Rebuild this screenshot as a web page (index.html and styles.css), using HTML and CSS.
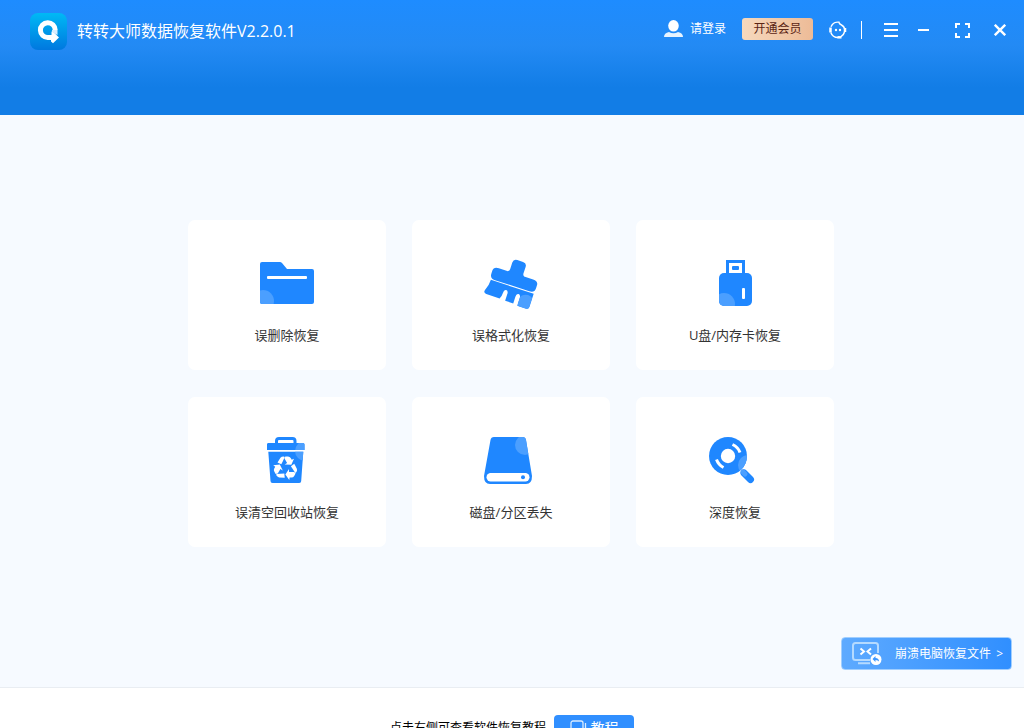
FILE: index.html
```html
<!DOCTYPE html>
<html lang="zh-CN">
<head>
<meta charset="utf-8">
<title>转转大师数据恢复软件</title>
<meta name="viewport" content="width=device-width, initial-scale=1">
<link rel="stylesheet" href="styles.css">
</head>
<body class="app">
<header class="header">
  <div class="brand">
    <svg class="logo" viewBox="0 0 37 37" aria-hidden="true">
      <defs><linearGradient id="logo-bg" x1="0" y1="0" x2="0" y2="1"><stop offset="0" stop-color="#00b9f5"/><stop offset="1" stop-color="#0078df"/></linearGradient></defs>
      <rect width="37" height="37" rx="8" fill="url(#logo-bg)"/>
      <path d="M18 24.500A7.400 7.400 0 1 1 25.200 17" fill="none" stroke="#fff" stroke-width="5"/>
      <path d="M17.500 22h4V18.500L24 19.500 29 24.500 23 30.300 21 28.500V27h-3.500z" fill="#fff"/>
      <path d="M22 17h5.500v5L22 19z" fill="#d9edfd"/>
    </svg>
    <h1 class="title">转转大师数据恢复软件V2.2.0.1</h1>
  </div>
  <div class="toolbar">
    <button class="login" type="button">
      <svg class="user-icon" viewBox="0 0 20 18" aria-hidden="true"><ellipse cx="9.500" cy="5.800" rx="5.300" ry="5.800" fill="#fff"/><path d="M0 17q0-4 5-5 2 1.300 4.500 1.300T14 12q5 1 5 5z" fill="#e6f3ff"/></svg>
      <span>请登录</span>
    </button>
    <button class="vip" type="button">开通会员</button>
    <button class="tool" type="button" aria-label="客服">
      <svg width="18" height="18" viewBox="0 0 18 18" fill="none" stroke="#fff"><path d="M10.500 1.300A7.600 7.600 0 0 0 2 5.800M1.800 11.500A7.600 7.600 0 0 0 9 16.500M10 1.300q0 1.700 2.500 2.700 2.500 1.300 3.300 4M15.500 11q-.8 3-3.500 4.700" stroke-width="1.500"/><path d="M1.500 6.500v5M16 7v4" stroke-width="2.500"/><path d="M8.500 16.300h4" stroke-width="2.500"/><g fill="#fff" stroke="none"><circle cx="7" cy="9" r="1.200"/><circle cx="11" cy="9" r="1.200"/></g></svg>
    </button>
    <span class="divider"></span>
    <div class="window-controls">
      <button class="tool" type="button" aria-label="菜单"><svg width="14" height="14" viewBox="0 0 14 14" fill="#fff"><path d="M0 0h14v2H0zM0 6h14v2H0zM0 12h14v2H0z"/></svg></button>
      <button class="tool" type="button" aria-label="最小化"><svg width="12" height="14" viewBox="0 0 12 14" fill="#fff"><path d="M0 6h11v2H0z"/></svg></button>
      <button class="tool" type="button" aria-label="全屏"><svg width="15" height="15" viewBox="0 0 15 15" fill="none" stroke="#fff" stroke-width="2"><path d="M1 5V1h4M10 1h4v4M14 10v4h-4M5 14H1v-4"/></svg></button>
      <button class="tool" type="button" aria-label="关闭"><svg width="12" height="12" viewBox="0 0 12 12" fill="none" stroke="#fff" stroke-width="2.400"><path d="M.8.800l10.400 10.400M11.200.800.800 11.200"/></svg></button>
    </div>
  </div>
</header>

<main class="main">
  <div class="grid">
    <button class="card" type="button">
      <svg class="card-icon" viewBox="0 0 56 56" fill="#1f87ff" aria-hidden="true">
        <clipPath id="folder"><path id="folder-shape" d="M3 6h18q1 0 2 1l5 6h25q2 0 2 2v31q0 2-2 2H3q-2 0-2-2V8q0-2 2-2z"/></clipPath>
        <use href="#folder-shape"/><circle cx="4" cy="45" r="11" fill="#4b9fff" clip-path="url(#folder)"/>
        <rect x="8" y="20" width="40" height="3" rx="1" fill="#fff"/>
      </svg>
      <span>误删除恢复</span>
    </button>
    <button class="card" type="button">
      <svg class="card-icon" viewBox="0 0 56 56" fill="#1f87ff" aria-hidden="true">
        <g transform="translate(31 24) rotate(18)">
          <path d="M-8.500-6.500Q-7-7.500-7-9V-16q0-4 4-4h6q4 0 4 4v7q0 1.500 1.500 2.500H18q5.500 0 5.500 4.500V1q0 5-5.500 5h-36q-5.500 0-5.500-5v-3q0-4.500 5.500-4.500z"/>
          <clipPath id="bristles"><path id="bristles-shape" d="M-22 7H23V21q0 2.500-2.500 2.500H11V15.500Q11 12 8.700 12T6.500 15.500v7H-2v-7Q-2 12-4.300 12T-6.500 15.500q0 4-1.500 6.500h-14q-3.500-.5-2.500-3.500 2.500-5 2.500-11.500z"/></clipPath>
          <use href="#bristles-shape"/><circle cx="18" cy="18" r="8" fill="#4b9fff" clip-path="url(#bristles)"/>
        </g>
      </svg>
      <span>误格式化恢复</span>
    </button>
    <button class="card" type="button">
      <svg class="card-icon" viewBox="0 0 56 56" fill="#1f87ff" aria-hidden="true">
        <path d="M20.500 19V5.500h16V19" fill="none" stroke="#1f87ff" stroke-width="3"/>
        <rect x="25" y="10" width="7" height="4" rx="1"/>
        <clipPath id="drive"><rect x="12" y="17" width="33" height="33" rx="5"/></clipPath>
        <rect x="12" y="17" width="33" height="33" rx="5"/><circle cx="17" cy="48" r="11" fill="#4b9fff" clip-path="url(#drive)"/>
        <rect x="35" y="32" width="3" height="11" rx="1" fill="#fff"/>
      </svg>
      <span>U盘/内存卡恢复</span>
    </button>
    <button class="card" type="button">
      <svg class="card-icon" viewBox="0 0 56 56" fill="#1f87ff" aria-hidden="true">
        <path d="M17.500 11V8q0-2.500 2.500-2.500h13.500Q36 5.500 36 8v3" fill="none" stroke="#1f87ff" stroke-width="3"/>
        <clipPath id="bin"><path id="bin-shape" d="M9 10h35q1.500 0 1.500 1.500V17H8v-5.500Q8 10 9 10zM9.300 18.800h35L42.200 48q0 2-2 2H13.500q-2 0-2-2z"/></clipPath>
        <use href="#bin-shape"/><circle cx="46" cy="18" r="10" fill="#4b9fff" clip-path="url(#bin)"/>
        <g transform="translate(26.500 35)" fill="#fff">
          <g id="recycle-arrow"><path d="M-8-5.500-5-10.200Q-4-11.500-2-11.500L-.6-11-4.200-3.800z"/><path d="M-.2-11.500H2.500Q4.300-11.500 5.200-10L6.200-8.300 8.500-9.300 5.800-3.200-.8-3.600 1.600-5-1-9.500z"/></g>
          <use href="#recycle-arrow" transform="rotate(120)"/><use href="#recycle-arrow" transform="rotate(240)"/>
        </g>
      </svg>
      <span>误清空回收站恢复</span>
    </button>
    <button class="card" type="button">
      <svg class="card-icon" viewBox="0 0 56 56" fill="#1f87ff" aria-hidden="true">
        <clipPath id="disk"><path id="disk-shape" d="M11 4h28.500q3 0 3.500 3l6 36q0 8-6 8H7q-6 0-6-8L7.500 7Q8 4 11 4z"/></clipPath>
        <use href="#disk-shape"/><circle cx="42" cy="12" r="10" fill="#4b9fff" clip-path="url(#disk)"/>
        <rect x="3.500" y="40" width="43" height="8.500" rx="4.200" fill="#fff"/><circle cx="40" cy="44.200" r="2"/>
      </svg>
      <span>磁盘/分区丢失</span>
    </button>
    <button class="card" type="button">
      <svg class="card-icon" viewBox="0 0 56 56" fill="#1f87ff" aria-hidden="true">
        <clipPath id="lens"><circle cx="21" cy="23" r="19"/></clipPath>
        <circle cx="21" cy="23" r="19"/><circle cx="41" cy="32" r="10" fill="#4b9fff" clip-path="url(#lens)"/>
        <circle cx="21" cy="23" r="7.200" fill="#fff"/>
        <path d="M25.500 11.500Q31 14 33 19.500M9.500 26.500Q11.500 32 16.500 34.500" fill="none" stroke="#fff" stroke-width="3"/>
        <path d="m37 40 6.500 6.500" stroke="#1f87ff" stroke-width="7" stroke-linecap="round"/><path d="m36 39 2 2" stroke="#4b9fff" stroke-width="5" stroke-linecap="round"/>
      </svg>
      <span>深度恢复</span>
    </button>
  </div>
  <button class="crash" type="button">
    <svg width="30" height="24" viewBox="0 0 30 24" fill="none" aria-hidden="true">
      <path d="M18 18H3.500Q1 18 1 15.500v-12Q1 1 3.500 1h20Q26 1 26 3.500V11M6 21.200h12" stroke="#b5daff" stroke-width="2"/>
      <path d="m8.500 6.500 3.500 3-3.500 3M19 6.500l-3.500 3 3.500 3" stroke="#fff" stroke-width="2"/>
      <circle cx="24" cy="17.500" r="5.500" fill="#fff"/><path d="m20.500 17 3-3v2q3.500 0 3.500 3.500Q26 18 23.500 18v2z" fill="#3d97ff"/>
    </svg>
    <span>崩溃电脑恢复文件</span><span class="arrow">&gt;</span>
  </button>
</main>

<footer class="footer">
  <span class="hint">点击右侧可查看软件恢复教程</span>
  <button class="tutorial" type="button">
    <svg width="17" height="16" viewBox="0 0 17 16" fill="none" stroke="#d9ecff" stroke-width="1.300" aria-hidden="true"><rect x="1" y="1" width="12" height="12" rx="2"/><path d="M15.500 3v9.500q0 2.500-2.500 2.500H4"/></svg>
    <span>教程</span>
  </button>
</footer>
</body>
</html>
```

FILE: styles.css
```css
* { box-sizing: border-box; }

.app {
  margin: 0;
  height: 100vh;
  display: flex;
  flex-direction: column;
  overflow: hidden;
  background: #f6faff;
  color: #333;
  font: 13px/20px "Open Sans", "Noto Sans CJK SC", sans-serif;
}

button {
  margin: 0;
  padding: 0;
  border: 0;
  background: none;
  color: inherit;
  font: inherit;
  cursor: pointer;
}

svg { display: block; flex: none; }

.header {
  flex: none;
  display: flex;
  justify-content: space-between;
  align-items: flex-start;
  padding: 13px 18px 65px 30px;
  background: linear-gradient(#1e8cff, #238af4 40%, #127de6 76%);
  color: #fff;
}

.brand { display: flex; align-items: center; gap: 10px; }
.logo { width: 37px; height: 37px; }
.title { margin: 0; padding-bottom: 2px; font-size: 16px; font-weight: 400; line-height: 24px; }

.toolbar { display: flex; align-items: center; height: 34px; }
.login { display: flex; align-items: center; gap: 6px; padding-bottom: 2px; font-size: 12px; }
.user-icon { width: 20px; height: 18px; }

.vip {
  width: 71px;
  height: 22px;
  margin: 0 16px 2px;
  border-radius: 3px;
  background: linear-gradient(90deg, #f6d9bd, #edbb97);
  color: #5a2414;
  font-size: 12px;
  line-height: 20px;
}

.divider { width: 1px; height: 18px; margin: 0 22px 0 14px; background: #fff; }
.window-controls { display: flex; align-items: center; gap: 25px; }
.window-controls .tool:first-child { margin-right: -5px; }
.window-controls .tool:last-child { margin-left: -1px; }

.main { flex: 1; display: flex; flex-direction: column; padding: 105px 12px 17px 10px; }

.grid {
  align-self: center;
  display: grid;
  grid-template-columns: repeat(3, 198px);
  gap: 27px 26px;
}

.card {
  display: flex;
  flex-direction: column;
  align-items: center;
  gap: 13px;
  padding: 36px 0 25px;
  border-radius: 7px;
  background: #fff;
}

.card-icon { width: 56px; height: 56px; }

.crash {
  align-self: flex-end;
  margin-top: auto;
  display: flex;
  align-items: center;
  height: 33px;
  padding: 0 8px 0 10px;
  border: 1px solid #a0ceff;
  border-radius: 4px;
  background: linear-gradient(90deg, #5eaaff, #308fff);
  color: #fff;
  font-size: 12px;
}

.crash svg { margin-right: 13px; }
.arrow { margin-left: 5px; }

.footer {
  flex: none;
  height: 41px;
  display: flex;
  justify-content: center;
  align-items: flex-start;
  gap: 8px;
  padding-top: 27px;
  border-top: 1px solid #e9edf2;
  background: #fff;
  font-size: 12px;
}

.hint { padding-top: 3px; color: #000; }

.tutorial {
  display: flex;
  align-items: center;
  justify-content: center;
  gap: 4px;
  width: 80px;
  height: 26px;
  border-radius: 4px;
  background: #308fff;
  color: #fff;
  font-size: 14px;
}
```
